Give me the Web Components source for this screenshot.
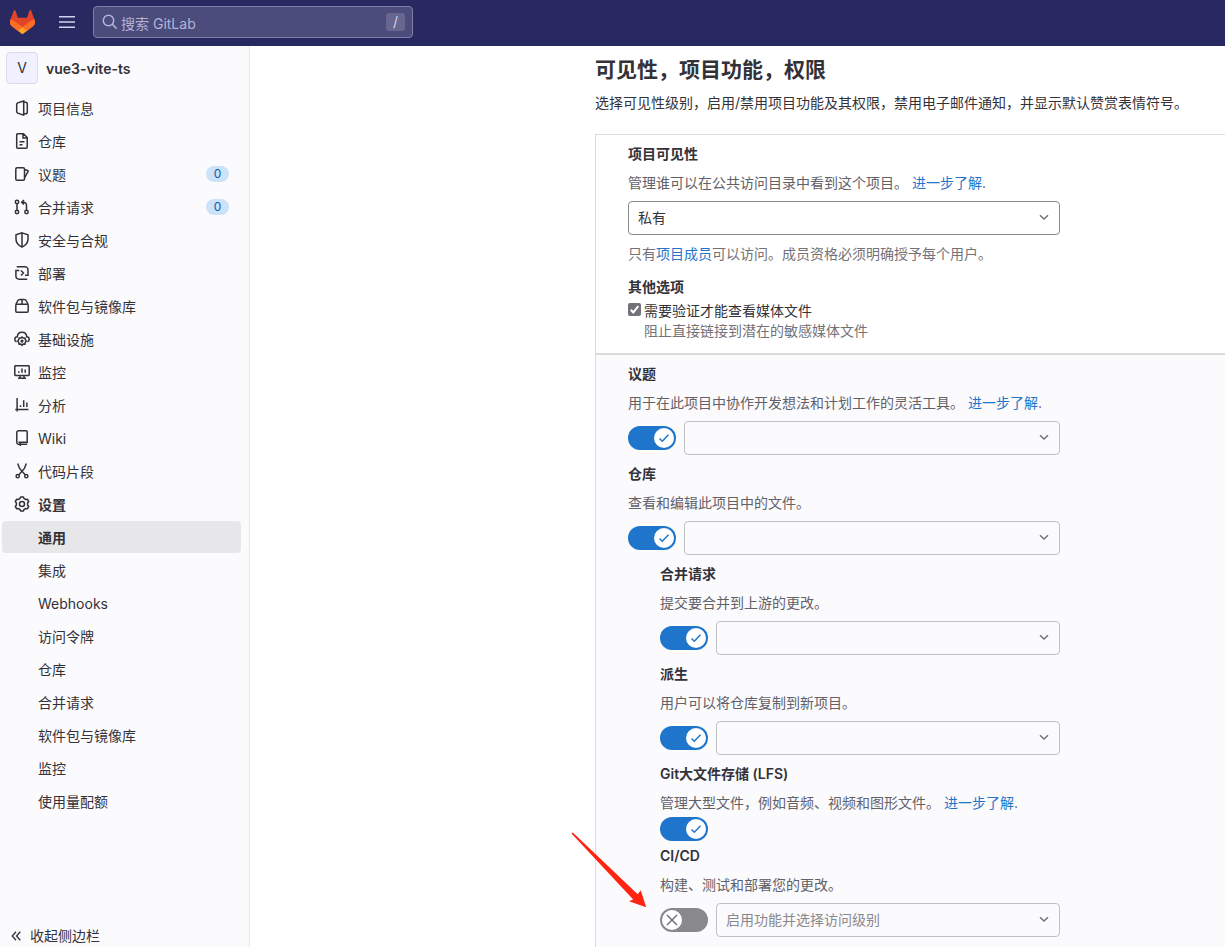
<!DOCTYPE html>
<html lang="zh-CN">
<head>
<meta charset="utf-8">
<meta name="viewport" content="width=device-width, initial-scale=1">
<title>通用设置 · vue3-vite-ts · GitLab</title>
<style>
  body {
    margin: 0;
    font: 14px/20px Inter, "Noto Sans CJK SC", sans-serif;
    color: #333238;
    background: #fff;
  }
</style>
</head>
<body>
<app-shell>
  <top-bar slot="header"></top-bar>
  <side-bar slot="sidebar" project="vue3-vite-ts">
    <nav-item icon="info">项目信息</nav-item>
    <nav-item icon="doc">仓库</nav-item>
    <nav-item icon="issues" count="0">议题</nav-item>
    <nav-item icon="merge" count="0">合并请求</nav-item>
    <nav-item icon="shield">安全与合规</nav-item>
    <nav-item icon="deploy">部署</nav-item>
    <nav-item icon="package">软件包与镜像库</nav-item>
    <nav-item icon="cloud">基础设施</nav-item>
    <nav-item icon="monitor">监控</nav-item>
    <nav-item icon="chart">分析</nav-item>
    <nav-item icon="book">Wiki</nav-item>
    <nav-item icon="snippet">代码片段</nav-item>
    <nav-item icon="settings" strong>设置</nav-item>
    <nav-item strong current>通用</nav-item>
    <nav-item>集成</nav-item>
    <nav-item>Webhooks</nav-item>
    <nav-item>访问令牌</nav-item>
    <nav-item>仓库</nav-item>
    <nav-item>合并请求</nav-item>
    <nav-item>软件包与镜像库</nav-item>
    <nav-item>监控</nav-item>
    <nav-item>使用量配额</nav-item>
  </side-bar>
  <settings-page>
    <span slot="title">可见性，项目功能，权限</span>
    <span slot="intro">选择可见性级别，启用/禁用项目功能及其权限，禁用电子邮件通知，并显示默认赞赏表情符号。</span>
    <visibility-settings slot="visibility"></visibility-settings>
    <feature-setting name="议题" toggle="on" select link>用于在此项目中协作开发想法和计划工作的灵活工具。</feature-setting>
    <feature-setting name="仓库" toggle="on" select>查看和编辑此项目中的文件。</feature-setting>
    <feature-setting name="合并请求" toggle="on" select nested>提交要合并到上游的更改。</feature-setting>
    <feature-setting name="派生" toggle="on" select nested>用户可以将仓库复制到新项目。</feature-setting>
    <feature-setting name="Git大文件存储 (LFS)" toggle="on" nested link>管理大型文件，例如音频、视频和图形文件。</feature-setting>
    <feature-setting name="CI/CD" toggle="off" select value="启用功能并选择访问级别" nested>构建、测试和部署您的更改。<callout-arrow slot="callout"></callout-arrow></feature-setting>
  </settings-page>
</app-shell>

<script>
const ICONS = {
  info: '<path d="M9.700 1 3.700 2.800 2.700 4v8l1 1.200 6 1.900zM9.700 2.200h1.800a1.800 1.800 0 0 1 1.800 1.800v8a1.800 1.800 0 0 1-1.800 1.800H9.700"/>',
  doc: '<path d="M3.700.8h5.800l3.700 3.700v9.700a1 1 0 0 1-1 1H3.700a1 1 0 0 1-1-1V1.800a1 1 0 0 1 1-1zM9 1v4h4M5.500 8.800h5M5.500 11.700h3"/>',
  issues: '<rect x="1.800" y="1.800" width="8.700" height="12.500" rx="1.300"/><path d="M10.500 3.600l3.100.8a.8.800 0 0 1 .5 1L10.500 12"/>',
  merge: '<circle cx="3" cy="3" r="1.700"/><circle cx="3" cy="13" r="1.700"/><circle cx="12.500" cy="13" r="1.700"/><path d="M3 4.800v6.400M12.500 11.200V6.200a3 3 0 0 0-3-3H8M10 1 7.700 3.200 10 5.400"/>',
  shield: '<path d="M8 .9l6 1.900v4.500c0 3.800-2.900 6.400-6 7.800-3.100-1.400-6-4-6-7.800V2.800zM8 1v14"/>',
  deploy: '<path d="M2.700 1.800H11a3 3 0 0 1 3 3v5.500H11M5.300 5.500H1.900v5.700a3 3 0 0 0 3 3h8.300M7 5.500 9.400 8 7 10.500"/>',
  package: '<rect x="1.800" y="6.300" width="12.400" height="7.900" rx="1"/><path d="M2 6.300l1.400-3a3 3 0 0 1 2.700-1.800h3.800a3 3 0 0 1 2.700 1.800l1.400 3M8 1.500v4.800"/>',
  cloud: '<path d="M2.600 10.800A2.500 2.500 0 0 1 .8 8.400a2.600 2.600 0 0 1 2.400-2.600C3.500 3 5.500 1.200 8 1.200S12.500 3 12.800 5.800a2.600 2.600 0 0 1 2.400 2.600 2.500 2.500 0 0 1-1.800 2.400"/><path d="M8 6.100l1.200 1 1.700-.1.400 1.700 1 1.300-1 1.400-.4 1.700-1.700-.1L8 14.300 6.800 13l-1.700.1-.4-1.700-1-1.400 1-1.300.4-1.700 1.700.1z"/><circle cx="8" cy="10.100" r=".8"/>',
  monitor: '<rect x=".8" y="1.800" width="14.400" height="9.600" rx=".6"/><path d="M4.800 7.200v1.600M8 4.400v4.400M11.200 5.600v3.200M6 11.400v2.500M10 11.400v2.500M4 14.200h8"/>',
  chart: '<path d="M3.100 1v13.500M1.300 12.600h13.200M6.500 8.200v1.900M9.700 3.200v6.900M12.900 5.400v4.700"/>',
  book: '<path d="M4.500 12.200h8.700V1.800a1 1 0 0 0-1-1H4.500a1.700 1.700 0 0 0-1.700 1.700v9.900a1.800 1.800 0 0 0 1.700 1.800h8.700M6.300 12v4"/>',
  snippet: '<circle cx="3.700" cy="13.200" r="1.600"/><circle cx="12.300" cy="13.200" r="1.600"/><path d="M3.700.5 5.600 5.400l5.700 6.500M12.300.5l-1.900 4.900-5.700 6.500"/>',
  settings: '<path d="M6.700.9h2.600l.7 1.600 1.500.9 1.800-.2 1.400 2.300L13.600 7v2l1.100 1.500-1.400 2.300-1.800-.2-1.500.9-.7 1.600H6.700L6 13.500l-1.500-.9-1.800.2-1.400-2.300L2.400 9V7L1.300 5.500l1.400-2.300 1.800.2L6 2.500z" stroke-linejoin="round"/><circle cx="8" cy="8" r="2.500"/>',
  menu: '<path d="M0 2.800h16M0 8h16M0 13.200h16"/>',
  search: '<circle cx="6.500" cy="6.500" r="5.200"/><path d="M10.400 10.400l4.300 4.300"/>',
  collapse: '<path d="M8 3.800 4.200 8 8 12.200M12.300 3.800 8.500 8l3.800 4.200" stroke-width="1.300"/>',
  chevron: '<path d="M4 6.200 8 10l4-3.800"/>',
  check: '<path d="M3.500 8.500l2.800 2.700 6.200-6.400"/>',
  cross: '<path d="M3 3l10 10M13 3 3 13"/>'
};
const icon = name => `<svg class="icon" viewBox="0 0 16 16" width="16" height="16" fill="none" stroke="currentColor" stroke-width="1.500" aria-hidden="true">${ICONS[name]}</svg>`;

const BASE = `
  *, *::before, *::after { box-sizing: border-box; }
  .icon { display: block; flex: none; }
  button, input, select { font: inherit; color: inherit; margin: 0; }
  a { color: #1f75cb; text-decoration: none; }
`;
const FORM = `
  .name { font-weight: 600; line-height: 22px; display: block; }
  .text { margin: 8px 0 0; color: #626168; white-space: nowrap; }
  .pick { position: relative; flex: 1; min-width: 0; }
  .pick select {
    display: block; width: 100%; height: 34px; padding: 0 32px 0 9px;
    appearance: none; border: 1px solid #89888d; border-radius: 4px;
    background: #fff; color: #333238; opacity: 1;
  }
  .pick select:disabled { background: #fbfafd; border-color: #bfbfc3; color: #89888d; }
  .pick .icon { position: absolute; right: 8px; top: 8px; color: #737278; pointer-events: none; }
`;

function define(tag, render) {
  customElements.define(tag, class extends HTMLElement {
    connectedCallback() {
      if (!this.shadowRoot) {
        this.attachShadow({ mode: 'open' }).innerHTML = render(this);
      }
    }
  });
}

define('app-shell', () => `
  <style>${BASE}
    :host { display: flex; flex-direction: column; min-height: 100vh; }
    .body { flex: 1; display: flex; }
    main { flex: 1; min-width: 0; display: flex; overflow: hidden; }
  </style>
  <slot name="header"></slot>
  <div class="body"><slot name="sidebar"></slot><main><slot></slot></main></div>`);

define('top-bar', () => `
  <style>${BASE}
    :host { display: block; background: #292961; color: #d1d1f0; }
    header { display: flex; align-items: center; height: 46px; padding: 0 8px 2px; }
    .logo { display: block; width: 28px; }
    .logo svg { display: block; margin: 0 auto; }
    .menu { margin: 0 14px 0 19px; padding: 4px; border: 0; background: none; }
    form { display: flex; align-items: center; flex: 0 1 320px; height: 32px; padding: 0 7px 0 8px;
      border: 1px solid #7d7da5; border-radius: 4px; background: #4b4b7c; color: #b3b3d6; }
    input { flex: 1; min-width: 0; height: 30px; padding: 2px 3px 0; border: 0; outline: 0; background: none; }
    input::placeholder { color: #b3b3d6; opacity: 1; }
    kbd { width: 19px; border-radius: 3px; background: #66668f; color: #d1d1f0;
      font: 14px/18px Inter, sans-serif; text-align: center; }
  </style>
  <header>
    <a class="logo" href="#" aria-label="GitLab"><svg width="25" height="24" viewBox="0 0 25 24" aria-hidden="true">
      <path d="m24.507 9.500-.034-.09L21.082.562a.896.896 0 0 0-1.694.091l-2.290 7.010H7.825L5.535.653a.898.898 0 0 0-1.694-.09L.451 9.411.416 9.500a6.297 6.297 0 0 0 2.090 7.278l.012.010.030.022 5.160 3.867 2.560 1.935 1.554 1.176a1.051 1.051 0 0 0 1.268 0l1.555-1.176 2.560-1.935 5.197-3.890.014-.010A6.297 6.297 0 0 0 24.507 9.500Z" fill="#E24329"/>
      <path d="m24.507 9.500-.034-.09a11.440 11.440 0 0 0-4.560 2.051l-7.447 5.632 4.742 3.584 5.197-3.890.014-.010A6.297 6.297 0 0 0 24.507 9.500Z" fill="#FC6D26"/>
      <path d="m7.707 20.677 2.560 1.935 1.555 1.176a1.051 1.051 0 0 0 1.268 0l1.555-1.176 2.560-1.935-4.743-3.584-4.755 3.584Z" fill="#FCA326"/>
      <path d="M5.010 11.461a11.430 11.430 0 0 0-4.560-2.050L.416 9.500a6.297 6.297 0 0 0 2.090 7.278l.012.010.030.022 5.160 3.867 4.745-3.584-7.444-5.632Z" fill="#FC6D26"/>
    </svg></a>
    <button class="menu" type="button" aria-label="菜单">${icon('menu')}</button>
    <form role="search">${icon('search')}<input type="text" placeholder="搜索 GitLab" aria-label="搜索 GitLab"><kbd>/</kbd></form>
  </header>`);

define('side-bar', el => `
  <style>${BASE}
    :host { display: flex; flex-direction: column; flex: none; width: 250px; box-sizing: border-box;
      background: #fbfafd; border-right: 1px solid #e7e7ea; }
    .project { display: flex; align-items: center; gap: 8px; padding: 6px 6px 8px; color: #333238; font-weight: 600; }
    .title { padding-top: 2px; }
    .avatar { width: 32px; height: 32px; border: 1px solid #dcdaee; border-radius: 4px;
      background: #f1f0ff; font-weight: 400; line-height: 30px; text-align: center; }
    nav { display: flex; flex-direction: column; gap: 1px; padding: 0 8px 0 2px; }
    .collapse { display: flex; align-items: center; gap: 6px; height: 22px; margin-top: auto;
      padding: 0 8px; border: 0; background: none; }
  </style>
  <a class="project" href="#"><span class="avatar">V</span><span class="title">${el.getAttribute('project')}</span></a>
  <nav aria-label="项目导航"><slot></slot></nav>
  <button class="collapse" type="button">${icon('collapse')}<span>收起侧边栏</span></button>`);

define('nav-item', el => `
  <style>${BASE}
    :host { display: block; }
    a { display: flex; align-items: center; gap: 8px; height: 32px; padding: 0 12px; border-radius: 4px; color: #333238; }
    .label { flex: 1; padding-top: 2px; }
    .gap { width: 16px; }
    .badge { min-width: 23px; border-radius: 8px; background: #cbe2f9; color: #0b5cad;
      font-size: 12px; line-height: 16px; text-align: center; }
    :host([strong]) a { font-weight: 600; }
    :host([current]) a { background: #e7e7ea; }
  </style>
  <a href="#"${el.hasAttribute('current') ? ' aria-current="page"' : ''}>
    ${el.hasAttribute('icon') ? icon(el.getAttribute('icon')) : '<span class="gap"></span>'}
    <span class="label"><slot></slot></span>
    ${el.hasAttribute('count') ? `<span class="badge">${el.getAttribute('count')}</span>` : ''}
  </a>`);

define('settings-page', () => `
  <style>${BASE}
    :host { flex: 1; min-width: 0; display: flex; flex-direction: column; padding: 10px 0 0 345px; }
    h4 { margin: 0; font-size: 21px; line-height: 28px; font-weight: 600; white-space: nowrap; }
    .intro { margin: 9px 0 21px; white-space: nowrap; }
    .panel { flex: 1; display: flex; flex-direction: column; border: solid #dbdbdb; border-width: 1px 0 0 1px; }
    .features { flex: 1; padding: 8px 32px 0; border-top: 2px solid #dbdbdb; background: #fbfafd; }
  </style>
  <h4><slot name="title"></slot></h4>
  <p class="intro"><slot name="intro"></slot></p>
  <div class="panel">
    <slot name="visibility"></slot>
    <div class="features"><slot></slot></div>
  </div>`);

define('visibility-settings', () => `
  <style>${BASE}${FORM}
    :host { display: block; padding: 8px 32px 12px; }
    .pick { max-width: 432px; margin-top: 8px; }
    .hint { margin: 8px 0 12px; line-height: 22px; color: #737278; }
    fieldset { margin: 0; padding: 0; border: 0; }
    legend { padding: 0; margin-bottom: 4px; font-weight: 600; }
    .option { display: grid; grid-template-columns: 13px 1fr; column-gap: 3px; }
    .option input { appearance: none; width: 13px; height: 13px; margin-top: 2px; border-radius: 2px; background: #737278;
      grid-area: 1 / 1; }
    .tick { grid-area: 1 / 1; width: 13px; height: 13px; margin-top: 2px; color: #fff; stroke-width: 2; pointer-events: none; }
    .sub { grid-column: 2; color: #737278; }
  </style>
  <label class="name" for="visibility">项目可见性</label>
  <p class="text">管理谁可以在公共访问目录中看到这个项目。 <a href="#">进一步了解</a>.</p>
  <div class="pick"><select id="visibility"><option>私有</option></select>${icon('chevron')}</div>
  <p class="hint">只有<a href="#">项目成员</a>可以访问。成员资格必须明确授予每个用户。</p>
  <fieldset>
    <legend>其他选项</legend>
    <div class="option">
      <input id="media" type="checkbox" checked aria-describedby="media-hint">
      <svg class="tick" viewBox="0 0 13 13" fill="none" stroke="currentColor" aria-hidden="true"><path d="M2.800 6.800l2.500 2.600 5-6.300"/></svg>
      <label for="media">需要验证才能查看媒体文件</label>
      <span class="sub" id="media-hint">阻止直接链接到潜在的敏感媒体文件</span>
    </div>
  </fieldset>`);

define('feature-setting', el => {
  const on = el.getAttribute('toggle') === 'on';
  const select = el.hasAttribute('select');
  return `
  <style>${BASE}${FORM}
    :host { display: block; max-width: 432px; box-sizing: border-box; }
    :host([nested]) { padding-left: 32px; }
    .row { position: relative; display: flex; align-items: center; gap: 8px; padding: 8px 0; }
    :host(:not([select])) .row { padding: 4px 0; }
    .toggle { display: flex; flex: none; width: 48px; height: 24px; padding: 2px; border: 0; border-radius: 12px;
      background: #89888d; color: #737278; }
    .toggle[aria-checked="true"] { justify-content: flex-end; background: #1f75cb; color: #1f75cb; }
    .knob { display: grid; place-items: center; width: 20px; height: 20px; border-radius: 50%; background: #fff; }
  </style>
  <label class="name" for="${select ? 'level' : 'toggle'}">${el.getAttribute('name')}</label>
  <p class="text"><slot></slot>${el.hasAttribute('link') ? ' <a href="#">进一步了解</a>.' : ''}</p>
  <div class="row">
    <button id="toggle" class="toggle" type="button" role="switch" aria-checked="${on}" aria-label="${el.getAttribute('name')}"><span class="knob">${icon(on ? 'check' : 'cross')}</span></button>
    ${select ? `<div class="pick"><select id="level" disabled><option>${el.getAttribute('value') || ''}</option></select>${icon('chevron')}</div>` : ''}
    <slot name="callout"></slot>
  </div>`;
});

define('callout-arrow', () => `
  <style>
    :host { position: absolute; right: 100%; bottom: 36px; margin-right: 12px; pointer-events: none; }
    svg { display: block; }
  </style>
  <svg width="78" height="78" viewBox="0 0 78 78" fill="#ff2312" aria-hidden="true">
    <path d="M1.500 2.500 2.800 1.500 67.700 63.300 70.700 59.300 76.200 76.300 59 70.300 63.200 68.400z"/>
  </svg>`);
</script>
</body>
</html>
